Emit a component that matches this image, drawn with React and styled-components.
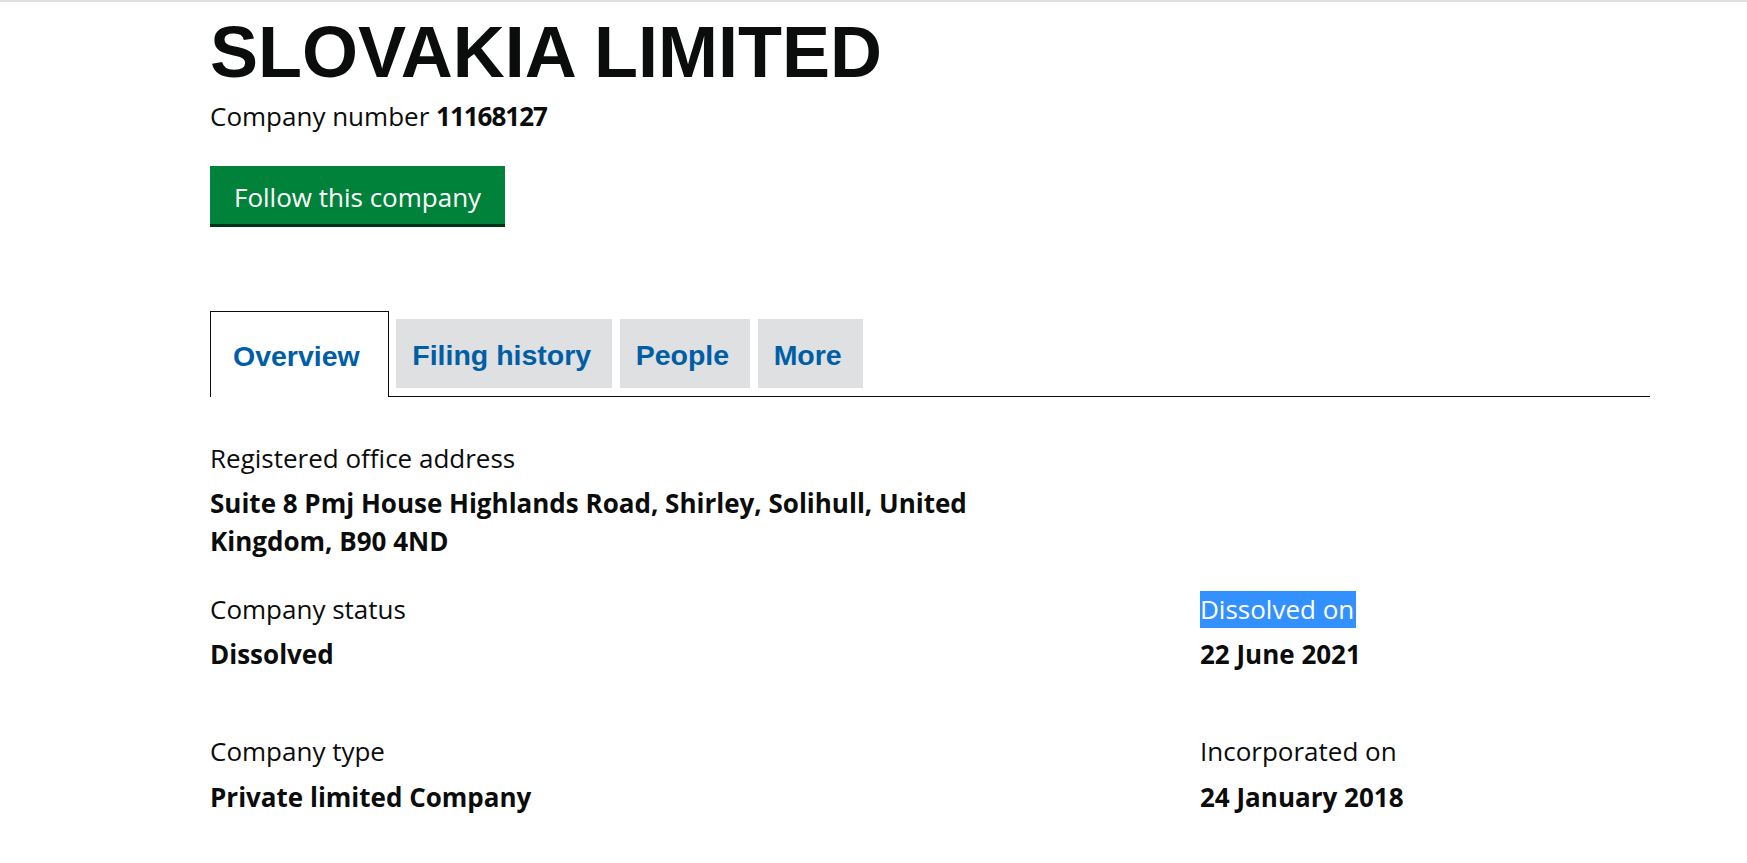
import React from "react";
import styled, { createGlobalStyle } from "styled-components";

const GlobalStyle = createGlobalStyle`
  html, body {
    margin: 0;
    padding: 0;
    background: #ffffff;
  }
  body {
    font-family: "Open Sans", "Noto Sans", sans-serif;
    color: #0b0c0c;
    border-top: 2px solid #dee0e2;
  }
`;

const Page = styled.main`
  padding: 0 97px 40px 210px;
`;

const Title = styled.h1`
  margin: 12.5px 0 0;
  font-family: "Liberation Sans", Arial, sans-serif;
  font-weight: 700;
  font-size: 72px;
  line-height: 75px;
  letter-spacing: 0;
`;

const CompanyNumber = styled.p`
  margin: 8.5px 0 0;
  font-size: 26px;
  line-height: 37.5px;

  strong {
    font-weight: 700;
    letter-spacing: -1px;
  }
`;

const FollowButton = styled.button`
  display: block;
  margin-top: 30.5px;
  padding: 13px 24px 7.5px;
  border: 0;
  border-radius: 0;
  background: #00823b;
  box-shadow: 0 3px 0 #003618;
  color: #ffffff;
  font-family: "Open Sans", "Noto Sans", sans-serif;
  font-size: 26px;
  line-height: 37.5px;
  cursor: pointer;
`;

const TabList = styled.ul`
  display: flex;
  align-items: flex-end;
  margin: 87px 0 0;
  padding: 0;
  list-style: none;
  border-bottom: 1px solid #0b0c0c;
`;

const Tab = styled.li`
  margin-right: 7.5px;
  font-family: "Liberation Sans", Arial, sans-serif;
  font-weight: 700;
  font-size: 28.5px;

  a {
    color: #005ea5;
    text-decoration: none;
  }

  ${({ $active }) =>
    $active
      ? `
    margin-bottom: -1px;
    padding: 4px 28px 1px 22px;
    line-height: 80px;
    background: #ffffff;
    border: 1px solid #0b0c0c;
    border-bottom: 0;
  `
      : `
    margin-bottom: 8px;
    padding: 4px 21px 0 16px;
    line-height: 65px;
    background: #dee0e2;
  `}
`;

const Details = styled.div`
  display: grid;
  grid-template-columns: 990px 1fr;
  margin-top: ${({ $top }) => $top}px;
`;

const Field = styled.dl`
  margin: 0;
  max-width: ${({ $wide }) => ($wide ? "820px" : "none")};
`;

const Label = styled.dt`
  margin: 0;
  font-size: 26px;
  line-height: 37.5px;
`;

const Selected = styled.span`
  display: inline-block;
  padding-right: 2px;
  background: #3390ff;
  color: #ffffff;
`;

const Value = styled.dd`
  margin: 8px 0 0;
  font-size: 26px;
  font-weight: 700;
  line-height: 37.5px;
`;

const tabs = ["Overview", "Filing history", "People", "More"];

export default function App() {
  return (
    <>
      <GlobalStyle />
      <Page>
        <Title>SLOVAKIA LIMITED</Title>
        <CompanyNumber>
          Company number <strong>11168127</strong>
        </CompanyNumber>
        <FollowButton>Follow this company</FollowButton>

        <TabList>
          {tabs.map((t, i) => (
            <Tab key={t} $active={i === 0}>
              <a href="#">{t}</a>
            </Tab>
          ))}
        </TabList>

        <Details $top={42.5}>
          <Field $wide>
            <Label>Registered office address</Label>
            <Value>
              Suite 8 Pmj House Highlands Road, Shirley, Solihull, United
              Kingdom, B90 4ND
            </Value>
          </Field>
        </Details>

        <Details $top={30.5}>
          <Field>
            <Label>Company status</Label>
            <Value>Dissolved</Value>
          </Field>
          <Field>
            <Label>
              <Selected>Dissolved on</Selected>
            </Label>
            <Value>22 June 2021</Value>
          </Field>
        </Details>

        <Details $top={59.5}>
          <Field>
            <Label>Company type</Label>
            <Value>Private limited Company</Value>
          </Field>
          <Field>
            <Label>Incorporated on</Label>
            <Value>24 January 2018</Value>
          </Field>
        </Details>
      </Page>
    </>
  );
}
